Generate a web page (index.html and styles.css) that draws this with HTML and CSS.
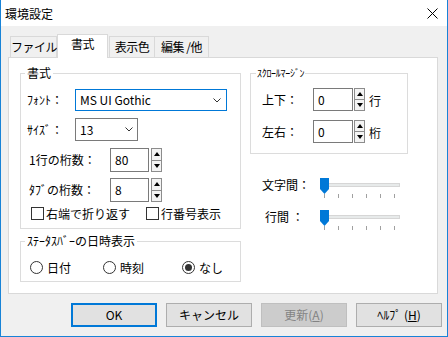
FILE: index.html
```html
<!DOCTYPE html>
<html lang="ja">
<head>
    <meta charset="UTF-8">
    <title>環境設定</title>
    <link rel="stylesheet" href="styles.css">
</head>
<body>
    <div class="window">
        <div class="titlebar">
            <span class="title">環境設定</span>
            <svg class="close" width="11" height="11" viewBox="0 0 11 11">
                <path d="M0.5 0.5L10.5 10.5M10.5 0.5L0.5 10.5" stroke="#000" stroke-width="1"/>
            </svg>
        </div>

        <div class="tabs">
            <div class="tab tab-file">ファイル</div>
            <div class="tab tab-active">書式</div>
            <div class="tab tab-color">表示色</div>
            <div class="tab tab-edit">編集 /他</div>
        </div>

        <div class="panel">
            <div class="col">
                <fieldset class="group group-format">
                    <legend>書式</legend>

                    <div class="row row-font">
                        <span class="lbl lbl-combo">ﾌｫﾝﾄ：</span>
                        <div class="combo combo-focus combo-font">
                            <span>MS UI Gothic</span>
                            <svg width="8" height="5" viewBox="0 0 8 5"><path d="M0.5 0.5L4 4L7.5 0.5" fill="none" stroke="#333" stroke-width="1"/></svg>
                        </div>
                    </div>

                    <div class="row row-size">
                        <span class="lbl lbl-combo">ｻｲｽﾞ：</span>
                        <div class="combo combo-size">
                            <span>13</span>
                            <svg width="8" height="5" viewBox="0 0 8 5"><path d="M0.5 0.5L4 4L7.5 0.5" fill="none" stroke="#333" stroke-width="1"/></svg>
                        </div>
                    </div>

                    <div class="row row-num row-cols">
                        <span class="lbl lbl-num">1行の桁数：</span>
                        <div class="field field-num">80</div>
                        <div class="spin">
                            <div class="spin-btn"><i class="tri-up"></i></div>
                            <div class="spin-btn"><i class="tri-down"></i></div>
                        </div>
                    </div>

                    <div class="row row-num row-tab">
                        <span class="lbl lbl-num">ﾀﾌﾞの桁数：</span>
                        <div class="field field-num">8</div>
                        <div class="spin">
                            <div class="spin-btn"><i class="tri-up"></i></div>
                            <div class="spin-btn"><i class="tri-down"></i></div>
                        </div>
                    </div>

                    <div class="row row-checks">
                        <label class="check check-wrap"><span class="box"></span>右端で折り返す</label>
                        <label class="check"><span class="box"></span>行番号表示</label>
                    </div>
                </fieldset>

                <fieldset class="group group-status">
                    <legend>ｽﾃｰﾀｽﾊﾞｰの日時表示</legend>
                    <div class="row row-radios">
                        <label class="radio radio-date"><span class="circle"></span>日付</label>
                        <label class="radio radio-time"><span class="circle"></span>時刻</label>
                        <label class="radio"><span class="circle checked"></span>なし</label>
                    </div>
                </fieldset>
            </div>

            <div class="col">
                <fieldset class="group group-scroll">
                    <legend>ｽｸﾛｰﾙﾏｰｼﾞﾝ</legend>

                    <div class="row row-margin row-margin-first">
                        <span class="lbl lbl-margin">上下：</span>
                        <div class="field field-margin">0</div>
                        <div class="spin spin-small">
                            <div class="spin-btn"><i class="tri-up"></i></div>
                            <div class="spin-btn"><i class="tri-down"></i></div>
                        </div>
                        <span class="unit">行</span>
                    </div>

                    <div class="row row-margin">
                        <span class="lbl lbl-margin">左右：</span>
                        <div class="field field-margin">0</div>
                        <div class="spin spin-small">
                            <div class="spin-btn"><i class="tri-up"></i></div>
                            <div class="spin-btn"><i class="tri-down"></i></div>
                        </div>
                        <span class="unit">桁</span>
                    </div>
                </fieldset>

                <div class="slider-row slider-row-first">
                    <span class="lbl lbl-slider">文字間：</span>
                    <div class="slider">
                        <div class="track"></div>
                        <svg class="thumb" width="9" height="16" viewBox="0 0 9 16"><path d="M0 0H9V11L4.5 16L0 11Z" fill="#0078d7"/></svg>
                        <div class="ticks"><i></i><i></i><i></i><i></i><i></i><i></i></div>
                    </div>
                </div>

                <div class="slider-row">
                    <span class="lbl lbl-slider lbl-gap">行間 ：</span>
                    <div class="slider">
                        <div class="track"></div>
                        <svg class="thumb" width="9" height="16" viewBox="0 0 9 16"><path d="M0 0H9V11L4.5 16L0 11Z" fill="#0078d7"/></svg>
                        <div class="ticks"><i></i><i></i><i></i><i></i><i></i><i></i></div>
                    </div>
                </div>
            </div>
        </div>

        <div class="buttons">
            <div class="btn btn-default">OK</div>
            <div class="btn">キャンセル</div>
            <div class="btn btn-disabled">更新(<u>A</u>)</div>
            <div class="btn">ﾍﾙﾌﾟ (<u>H</u>)</div>
        </div>
    </div>
</body>
</html>
```

FILE: styles.css
```css
* {
    margin: 0;
    padding: 0;
    box-sizing: border-box;
}

body {
    font-family: 'Noto Sans CJK JP', 'Noto Sans', sans-serif;
    font-size: 12px;
    line-height: 14px;
    color: #000;
    background: #fff;
}

.window {
    width: 448px;
    height: 337px;
    border: 1px solid #1883d7;
    border-top: none;
    background: #f0f0f0;
}

/* title bar */
.titlebar {
    height: 26px;
    background: #fff;
    display: flex;
    align-items: center;
    justify-content: space-between;
    padding: 0 9px 0 4px;
}

.title {
    font-size: 12px;
    padding-top: 1px;
}

.close {
    margin-top: 1px;
}

/* tabs */
.tabs {
    height: 31px;
    display: flex;
    align-items: flex-end;
    padding-left: 9px;
}

.tab {
    height: 21px;
    border: 1px solid #d9d9d9;
    border-bottom: none;
    background: #f0f0f0;
    text-align: center;
    padding-top: 3px;
    white-space: nowrap;
    letter-spacing: -0.5px;
}

.tab-file { width: 47px; }
.tab-color { width: 46px; margin-left: 1px; }
.tab-edit { width: 55px; margin-left: -1px; }

.tab-active {
    width: 51px;
    height: 24px;
    margin-bottom: -1px;
    padding-top: 2px;
    background: #fff;
    position: relative;
    z-index: 1;
}

/* panel */
.panel {
    width: 430px;
    height: 237px;
    margin-left: 7px;
    border: 1px solid #d9d9d9;
    background: #fff;
    display: grid;
    grid-template-columns: 221px 158px;
    column-gap: 9px;
    align-content: start;
    padding: 8px 0 0 11px;
}

.group {
    border: 1px solid #dcdcdc;
    min-width: 0;
}

.group legend {
    margin-left: 4px;
    padding: 0 2px;
    line-height: 14px;
}

.row {
    display: flex;
    align-items: center;
}

.lbl {
    flex-shrink: 0;
    white-space: nowrap;
}

.lbl-combo { width: 48px; }
.lbl-num { width: 81px; }
.lbl-margin { width: 51px; }

.row-font { margin-top: 9px; padding-left: 6px; }
.row-size { margin-top: 7px; padding-left: 6px; }
.row-cols { margin-top: 7px; padding-left: 8px; }
.row-tab { margin-top: 6px; padding-left: 8px; }

.combo {
    display: flex;
    align-items: center;
    justify-content: space-between;
    background: #fff;
    border: 1px solid #7a7a7a;
    padding: 0 4px 0 4px;
}

.combo-focus {
    border-color: #0078d7;
}

.combo-font {
    width: 152px;
    height: 22px;
    padding-right: 5px;
}

.combo-size {
    width: 63px;
    height: 23px;
}

.field {
    background: #fff;
    border: 1px solid #7a7a7a;
    padding: 0 4px;
    display: flex;
    align-items: center;
}

.field-num {
    width: 39px;
    height: 24px;
}

.spin {
    width: 11px;
    height: 24px;
    margin-left: 2px;
    display: flex;
    flex-direction: column;
    border: 1px solid #8c8c8c;
    background: #f4f4f4;
}

.spin-small {
    height: 23px;
    margin-left: 1px;
}

.spin-btn {
    flex: 1;
    display: flex;
    align-items: center;
    justify-content: center;
}

.spin-btn + .spin-btn {
    border-top: 1px solid #8c8c8c;
}

.tri-up {
    width: 0;
    height: 0;
    border-left: 3px solid transparent;
    border-right: 3px solid transparent;
    border-bottom: 4px solid #000;
}

.tri-down {
    width: 0;
    height: 0;
    border-left: 3px solid transparent;
    border-right: 3px solid transparent;
    border-top: 4px solid #000;
}

/* checkboxes */
.row-checks {
    margin-top: 5px;
    padding-left: 10px;
    margin-bottom: 8px;
    height: 13px;
}

.check,
.radio {
    display: flex;
    align-items: center;
    gap: 2px;
    white-space: nowrap;
}

.check-wrap {
    width: 115px;
}

.box {
    width: 13px;
    height: 13px;
    border: 1px solid #333;
    background: #fff;
}

/* status group */
.group-status {
    margin-top: 5px;
}

.row-radios {
    margin-top: 13px;
    margin-bottom: 7px;
    padding-left: 9px;
    height: 13px;
}

.radio {
    gap: 4px;
}

.radio-date { width: 73px; }
.radio-time { width: 79px; }

.circle {
    width: 13px;
    height: 13px;
    border: 1px solid #333;
    border-radius: 50%;
    background: #fff;
    display: flex;
    align-items: center;
    justify-content: center;
}

.circle.checked::after {
    content: '';
    width: 7px;
    height: 7px;
    border-radius: 50%;
    background: #333;
}

/* scroll margin */
.group-scroll legend {
    margin-left: 5px;
    padding: 0 1px;
    font-size: 10px;
    letter-spacing: -0.3px;
}

.row-margin {
    margin-top: 9px;
    padding-left: 11px;
}

.row-margin-first {
    margin-top: 8px;
}

.row-margin:last-child {
    margin-bottom: 10px;
}

.field-margin {
    width: 40px;
    height: 23px;
}

.unit {
    margin-left: 4px;
    padding-top: 3px;
}

/* sliders */
.slider-row {
    display: flex;
    align-items: flex-start;
    padding-left: 12px;
    margin-top: 11px;
}

.slider-row-first {
    margin-top: 24px;
}

.lbl-slider {
    width: 58px;
    padding-top: 0;
}

.lbl-gap {
    padding-left: 3px;
}

.slider {
    position: relative;
    width: 80px;
    height: 21px;
}

.track {
    width: 79px;
    height: 4px;
    margin: 5px 0 0 1px;
    background: #e7eaea;
    border: 1px solid #d6d6d6;
}

.thumb {
    position: absolute;
    left: 0;
    top: 0;
}

.ticks {
    display: flex;
    gap: 13px;
    padding-left: 4px;
    margin-top: 7px;
}

.ticks i {
    width: 1px;
    height: 4px;
    background: #a0a0a0;
}

/* buttons */
.buttons {
    display: flex;
    justify-content: flex-end;
    gap: 9px;
    padding: 9px 5px 0 0;
}

.btn {
    width: 86px;
    height: 24px;
    border: 1px solid #adadad;
    background: #e1e1e1;
    display: flex;
    align-items: center;
    justify-content: center;
    white-space: nowrap;
}

.btn-default {
    border: 2px solid #0078d7;
}

.btn-disabled {
    background: #cccccc;
    border-color: #bfbfbf;
    color: #838383;
}
```
